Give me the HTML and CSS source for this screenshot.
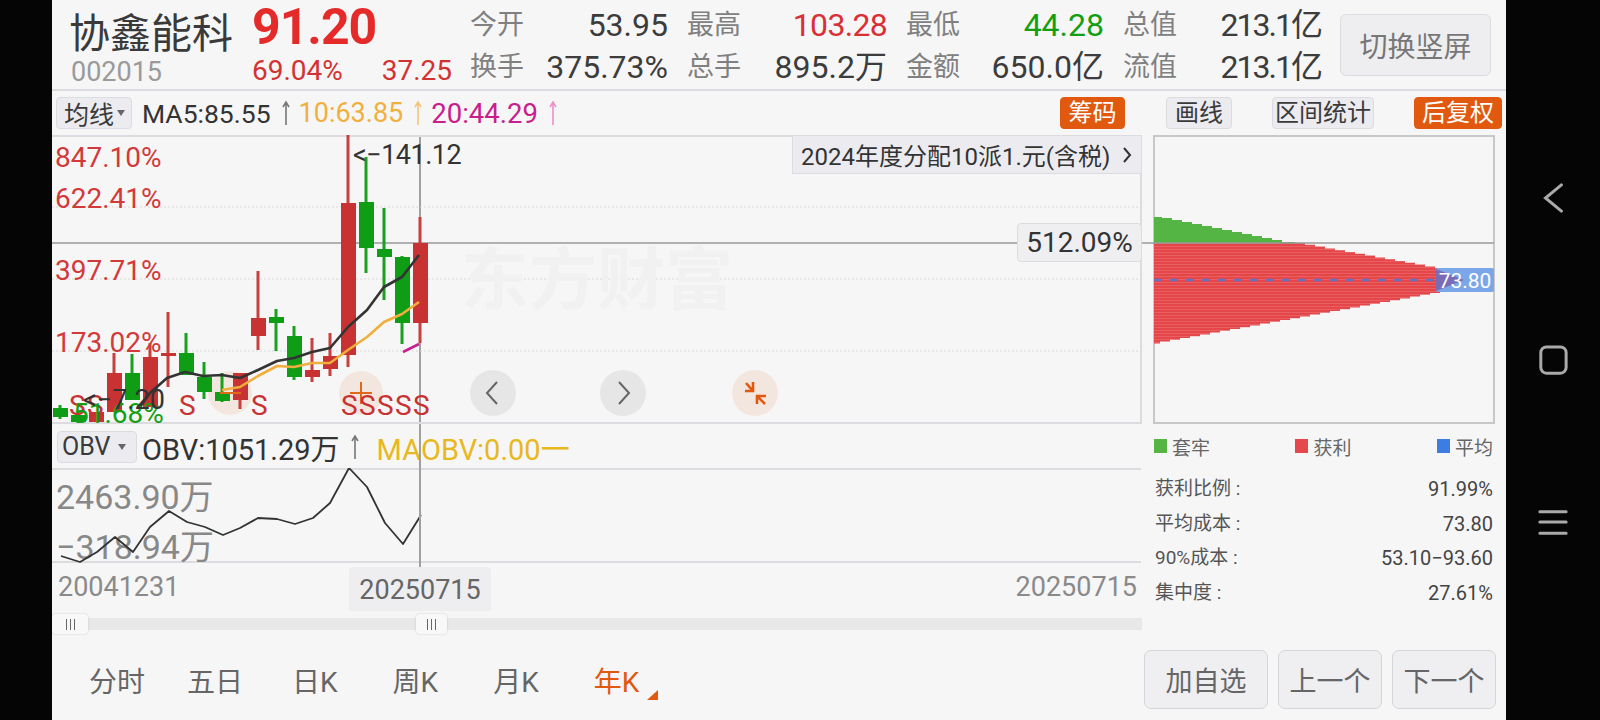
FILE: index.html
```html
<!DOCTYPE html>
<html lang="zh">
<head>
  <meta charset="UTF-8">
  <meta name="viewport" content="width=device-width, initial-scale=1.0">
  <title>协鑫能科 002015</title>
  <link rel="stylesheet" href="styles.css">
</head>
<body>
  <div class="app">
    <div class="edge"></div>

    <main class="main">
      <!-- 行情头部 -->
      <header class="quote">
        <div class="name-box">
          <div class="stock-name">协鑫能科</div>
          <div class="stock-code">002015</div>
        </div>
        <div class="price-box">
          <div class="price">91.20</div>
          <div class="change"><span>69.04%</span><span>37.25</span></div>
        </div>
        <div class="stats">
          <div class="stat"><span class="stat-label">今开</span><span>53.95</span></div>
          <div class="stat"><span class="stat-label">最高</span><span class="up tight-sm">103.28</span></div>
          <div class="stat"><span class="stat-label">最低</span><span class="down">44.28</span></div>
          <div class="stat"><span class="stat-label">总值</span><span class="tight">213.1亿</span></div>
          <div class="stat"><span class="stat-label">换手</span><span>375.73%</span></div>
          <div class="stat"><span class="stat-label">总手</span><span>895.2万</span></div>
          <div class="stat"><span class="stat-label">金额</span><span>650.0亿</span></div>
          <div class="stat"><span class="stat-label">流值</span><span class="tight">213.1亿</span></div>
        </div>
        <button class="rotate-btn">切换竖屏</button>
      </header>

      <div class="workspace">
        <section class="charts">
          <div class="crosshair"></div>

          <div class="indicator-row">
            <button class="select-btn">均线<i class="caret"></i></button>
            <span class="ma-item">MA5:85.55</span>
            <svg class="arrow arrow-gray" viewBox="0 0 10 26"><path d="M5 25V2M2 7L5 2L8 7"/></svg>
            <span class="ma-item ma-orange">10:63.85</span>
            <svg class="arrow arrow-orange" viewBox="0 0 10 26"><path d="M5 25V2M2 7L5 2L8 7"/></svg>
            <span class="ma-item ma-pink">20:44.29</span>
            <svg class="arrow arrow-pink" viewBox="0 0 10 26"><path d="M5 25V2M2 7L5 2L8 7"/></svg>
            <button class="chip chip-on chip-end">筹码</button>
          </div>

          <!-- K线图 -->
          <div class="kline">
            <svg class="kline-svg" viewBox="52 135 1090 290" width="1090" height="290">
              <path class="frame" d="M52 136H1141V423H52M1141 136V423"/>
              <path class="grid" d="M52 207H1141M52 279H1141M52 351H1141"/>
              <text class="watermark" x="461" y="304">东方财富</text>
              <path class="cross" d="M52 243H1141"/>

              <text class="axis-up" x="55" y="167">847.10%</text>
              <text class="axis-up" x="55" y="208">622.41%</text>
              <text class="axis-up" x="55" y="280">397.71%</text>
              <text class="axis-up" x="55" y="352">173.02%</text>

              <circle class="dot-peach" cx="230" cy="393" r="22"/>
              <circle class="dot-peach" cx="361" cy="393" r="22"/>

              <g class="candle-up">
                <path class="wick" d="M114 353V412M150 343V407M168 312V387M240 373V409M258 271V350M312 338V382M330 333V376M348 135V367M420 217V343"/>
                <rect x="89" y="412" width="15" height="10"/>
                <rect x="107" y="373" width="15" height="39"/>
                <rect x="143" y="357" width="15" height="50"/>
                <rect x="161" y="353" width="15" height="3"/>
                <rect x="233" y="373" width="15" height="27"/>
                <rect x="251" y="318" width="15" height="18"/>
                <rect x="305" y="370" width="15" height="7"/>
                <rect x="323" y="356" width="15" height="13"/>
                <rect x="341" y="203" width="15" height="152"/>
                <rect x="413" y="243" width="15" height="80"/>
              </g>
              <g class="candle-down">
                <path class="wick" d="M60 405V419M78 412V423M132 354V400M186 333V375M204 362V399M222 373V402M276 309V351M294 326V380M366 157V273M384 208V300M402 256V344"/>
                <rect x="53" y="408" width="15" height="9"/>
                <rect x="71" y="415" width="15" height="7"/>
                <rect x="125" y="373" width="15" height="27"/>
                <rect x="179" y="353" width="15" height="22"/>
                <rect x="197" y="377" width="15" height="15"/>
                <rect x="215" y="392" width="15" height="9"/>
                <rect x="269" y="317" width="15" height="6"/>
                <rect x="287" y="336" width="15" height="41"/>
                <rect x="359" y="202" width="15" height="46"/>
                <rect x="377" y="249" width="15" height="8"/>
                <rect x="395" y="257" width="15" height="66"/>
              </g>

              <polyline class="line-black" points="140,407 150,393 167,378 185,372 203,376 222,375 240,378 258,370 277,361 294,358 312,352 330,348 348,327 367,310 384,287 402,277 419,255"/>
              <polyline class="line-orange" points="222,390 240,387 258,376 277,366 294,367 312,363 330,363 348,350 367,337 384,322 402,314 419,302"/>
              <path class="line-pink" d="M403 352L419 344"/>

              <path class="mark-orange" d="M220 393H241M350 393H372M361 382V404"/>

              <text class="mark-s" x="69" y="415">S</text>
              <text class="mark-s" x="87" y="415">S</text>
              <text class="mark-s" x="179" y="415">S</text>
              <text class="mark-s" x="251" y="415">S</text>
              <text class="mark-s" x="341" y="415">S</text>
              <text class="mark-s" x="359" y="415">S</text>
              <text class="mark-s" x="377" y="415">S</text>
              <text class="mark-s" x="395" y="415">S</text>
              <text class="mark-s" x="413" y="415">S</text>

              <text class="axis-down" x="73" y="423">51.68%</text>
              <text class="note" x="83" y="409">&lt;−7.20</text>
              <text class="note note-tight" x="353" y="164">&lt;−141.12</text>

              <circle class="dot-gray" cx="493" cy="393" r="23"/>
              <path class="nav-chevron" d="M497 382L487 393L497 404"/>
              <circle class="dot-gray" cx="623" cy="393" r="23"/>
              <path class="nav-chevron" d="M619 382L629 393L619 404"/>
              <circle class="dot-peach" cx="755" cy="393" r="23"/>
              <path class="shrink-icon" d="M745 391H753V382M753 391L746 383M757 404V396H766M757 396L765 404"/>
            </svg>
            <div class="notice">2024年度分配10派1.元(含税)
              <svg class="notice-arrow" viewBox="0 0 10 18"><path d="M2 2L8 9L2 16"/></svg>
            </div>
            <div class="cross-tag">512.09%</div>
          </div>

          <div class="indicator-row obv-row">
            <button class="select-btn obv-btn">OBV<i class="caret"></i></button>
            <span class="obv-item">OBV:1051.29万</span>
            <svg class="arrow arrow-gray" viewBox="0 0 10 26"><path d="M5 25V2M2 7L5 2L8 7"/></svg>
            <span class="obv-item obv-amber">MAOBV:0.00一</span>
          </div>

          <!-- OBV副图 -->
          <svg class="obv-svg" viewBox="52 468 1090 96" width="1090" height="96">
            <path class="frame" d="M52 469H1141M52 562H1141"/>
            <text class="obv-axis" x="56" y="509">2463.90万</text>
            <text class="obv-axis" x="56" y="559">−318.94万</text>
            <polyline class="line-thin" points="61,556 80,562 97,552 115,537 133,552 150,527 169,511 187,522 205,527 223,535 240,528 258,518 277,519 295,524 313,518 330,503 349,468 367,487 385,523 403,544 421,515"/>
          </svg>

          <div class="dates">
            <span>20041231</span>
            <span class="date-current">20250715</span>
            <span>20250715</span>
          </div>

          <div class="slider">
            <div class="slider-handle handle-start"><i></i><i></i><i></i></div>
            <div class="slider-handle handle-end"><i></i><i></i><i></i></div>
          </div>

          <nav class="tabs">
            <span class="tab tab-fenshi">分时</span>
            <span class="tab tab-wuri">五日</span>
            <span class="tab tab-ri">日K</span>
            <span class="tab tab-zhou">周K</span>
            <span class="tab tab-yue">月K</span>
            <span class="tab tab-active">年K<i class="corner"></i></span>
          </nav>
        </section>

        <aside class="side">
          <div class="side-tools">
            <button class="chip chip-draw">画线</button>
            <button class="chip chip-range">区间统计</button>
            <button class="chip chip-on chip-adjust">后复权</button>
          </div>

          <!-- 筹码分布 -->
          <svg class="dist-svg" viewBox="1142 135 364 290" width="364" height="290">
            <defs>
              <pattern id="red-stripes" width="4" height="3" patternUnits="userSpaceOnUse">
                <rect width="4" height="3" fill="#e5464a"/>
                <rect width="4" height="1" fill="#e95f62"/>
              </pattern>
            </defs>
            <rect class="dist-frame" x="1154" y="136" width="340" height="287"/>
            <path class="dist-green" d="M1154 217H1162V218H1172V220H1182V222H1192V224H1202V226H1212V228H1222V230H1232V232H1242V234H1252V236H1262V238H1272V240H1282V242H1295V243H1154Z"/>
            <path fill="url(#red-stripes)" d="M1154 243H1295h10v1.8h10v1.8h10v1.8h10v1.8h10v1.8h10v1.8h10v1.8h10v1.8h10v1.8h10v1.8h10v1.8h10v1.8h10v1.8h10v1.8H1440V293h-10v1.8h-10v1.8h-10v1.8h-10v1.8h-10v1.8h-10v1.8h-10v1.8h-10v1.8h-10v1.8h-10v1.8h-10v1.8h-10v1.8h-10v1.8h-10v1.8h-10v1.8h-10v1.8h-10v1.8h-10v1.8h-10v1.8h-10v1.8h-10v1.8h-10v1.8h-10v1.8h-10v1.8h-10v1.8h-10v1.8h-10v1.8h-10v1.8H1154Z"/>
            <path class="cross" d="M1142 243H1494"/>
            <path class="dist-avg" d="M1154 280H1436"/>
            <rect class="price-tag" x="1436" y="268" width="58" height="24" rx="2"/>
            <path class="price-tag-mix" d="M1436 269L1464 280L1436 291Z"/>
            <text class="price-tag-text" x="1465" y="288">73.80</text>
          </svg>

          <div class="legend">
            <span class="legend-item"><i class="swatch swatch-green"></i>套牢</span>
            <span class="legend-item"><i class="swatch swatch-red"></i>获利</span>
            <span class="legend-item"><i class="swatch swatch-blue"></i>平均</span>
          </div>

          <div class="cost-list">
            <div class="cost-row"><span>获利比例 :</span><span>91.99%</span></div>
            <div class="cost-row"><span>平均成本 :</span><span>73.80</span></div>
            <div class="cost-row"><span>90%成本 :</span><span>53.10−93.60</span></div>
            <div class="cost-row"><span>集中度 :</span><span>27.61%</span></div>
          </div>

          <div class="actions">
            <button class="action-btn action-wide">加自选</button>
            <button class="action-btn">上一个</button>
            <button class="action-btn">下一个</button>
          </div>
        </aside>
      </div>
    </main>

    <!-- 手机导航条 -->
    <div class="phone-nav">
      <svg class="phone-icon" viewBox="0 0 32 32"><path d="M25 2L8 16L25 30"/></svg>
      <svg class="phone-icon" viewBox="0 0 32 32"><rect x="3" y="2" width="27" height="28" rx="6"/></svg>
      <svg class="phone-icon" viewBox="0 0 32 32"><path d="M2 5H30M2 16H30M2 28H30"/></svg>
    </div>
  </div>
</body>
</html>
```

FILE: styles.css
```css
* {
  box-sizing: border-box;
}

body {
  margin: 0;
  background-color: #000;
  font-family: Roboto, "Noto Sans CJK SC", sans-serif;
  color: #333;
}

button {
  font-family: inherit;
  padding: 0;
  cursor: pointer;
}

.app {
  display: flex;
  width: 1600px;
  height: 720px;
  overflow: hidden;
}

.edge {
  width: 52px;
  background-color: #050505;
}

.main {
  width: 1454px;
  background-color: #f6f6f6;
  display: flex;
  flex-direction: column;
}

/* 头部 */
.quote {
  display: flex;
  height: 91px;
  padding-left: 17px;
  border-bottom: 2px solid #dcdce0;
}

.name-box {
  width: 183px;
}

.stock-name {
  font-size: 41px;
  line-height: 48px;
  margin-top: 10px;
  color: #3a3a3a;
}

.stock-code {
  font-size: 27px;
  line-height: 30px;
  margin-top: -1px;
  color: #9a9a9a;
  margin-left: 2px;
}

.price-box {
  width: 218px;
}

.price {
  font-size: 50px;
  line-height: 54px;
  font-weight: 700;
  color: #e52a2a;
  letter-spacing: -1px;
}

.change {
  display: flex;
  justify-content: space-between;
  width: 200px;
  font-size: 28px;
  line-height: 30px;
  margin-top: 2px;
  color: #d23232;
}

.stats {
  display: grid;
  grid-template-columns: 198px 200px 198px 198px;
  grid-auto-rows: 42px;
  column-gap: 19px;
  padding-top: 4px;
  font-size: 32px;
  line-height: 42px;
  color: #3c3c3c;
}

.stat {
  display: flex;
  justify-content: space-between;
}

.stat-label {
  font-size: 27px;
  color: #808080;
}

.up {
  color: #d92f35;
}

.down {
  color: #12a012;
}

.tight {
  letter-spacing: -2px;
}

.tight-sm {
  letter-spacing: -0.7px;
}

.rotate-btn {
  width: 151px;
  height: 62px;
  margin: 14px 0 0 19px;
  font-size: 28px;
  color: #777;
  background-color: #eeeef0;
  border: 1px solid #dcdce0;
  border-radius: 6px;
}

.workspace {
  flex: 1;
  display: flex;
}

.charts {
  position: relative;
  width: 1090px;
}

/* 指标栏 */
.indicator-row {
  display: flex;
  align-items: center;
  height: 44px;
  padding-left: 4px;
}

.select-btn {
  width: 76px;
  height: 32px;
  display: flex;
  align-items: center;
  padding-left: 7px;
  font-size: 25px;
  color: #3a3a3a;
  background-color: #ececf0;
  border: 1px solid #dcdce0;
  border-radius: 4px;
}

.caret {
  width: 0;
  height: 0;
  margin-left: 3px;
  border-left: 4px solid transparent;
  border-right: 4px solid transparent;
  border-top: 6px solid #666;
}

.ma-item {
  font-size: 26.5px;
  color: #333;
  margin-left: 10px;
}

.ma-orange {
  font-size: 27px;
  color: #f0b040;
  margin-left: 8px;
}

.ma-pink {
  font-size: 27.5px;
  color: #c7208c;
  margin-left: 8px;
}

.arrow {
  width: 10px;
  height: 26px;
  margin-left: 10px;
  flex: none;
}

.arrow path {
  fill: none;
  stroke-width: 1.6;
}

.arrow-gray path {
  stroke: #777;
}

.arrow-orange path {
  stroke: #f4c47a;
}

.arrow-pink path {
  stroke: #ec90c8;
}

.chip {
  height: 32px;
  display: flex;
  align-items: center;
  justify-content: center;
  font-size: 24px;
  line-height: 1;
  color: #3a3a3a;
  background-color: #ececf0;
  border: 1px solid #dcdce0;
  border-radius: 4px;
}

.chip-on {
  color: #fff;
  background-color: #e0590f;
  border-color: #e0590f;
}

.chip-end {
  width: 65px;
  margin-left: auto;
  margin-right: 17px;
}

/* K线 */
.kline {
  position: relative;
  height: 291px;
}

.kline-svg,
.obv-svg,
.dist-svg {
  display: block;
}

.frame {
  fill: none;
  stroke: #dcdce0;
  stroke-width: 2;
}

.grid {
  fill: none;
  stroke: #d8d8d8;
  stroke-width: 1;
  stroke-dasharray: 2 2;
}

.cross {
  fill: none;
  stroke: #999;
  stroke-width: 1.6;
}

.watermark {
  font-size: 68px;
  font-weight: 700;
  fill: #f1f1f1;
}

.axis-up {
  font-size: 28px;
  fill: #d23a3a;
}

.axis-down {
  font-size: 28px;
  fill: #12a012;
}

.note {
  font-size: 27px;
  fill: #333;
}

.note-tight {
  letter-spacing: -0.5px;
}

.mark-s {
  font-size: 28px;
  fill: #c83232;
}

.candle-up rect {
  fill: #c83232;
}

.candle-down rect {
  fill: #0f9d16;
}

.wick {
  fill: none;
  stroke-width: 3;
}

.candle-up .wick {
  stroke: #c83f3f;
}

.candle-down .wick {
  stroke: #1a9f1f;
}

.line-black,
.line-orange,
.line-pink,
.line-thin {
  fill: none;
  stroke-linejoin: round;
}

.line-black {
  stroke: #333;
  stroke-width: 2.6;
}

.line-orange {
  stroke: #f0ae3c;
  stroke-width: 2.6;
}

.line-pink {
  stroke: #c71f8e;
  stroke-width: 2.6;
}

.line-thin {
  stroke: #333;
  stroke-width: 1.8;
}

.mark-orange {
  fill: none;
  stroke: #e0681a;
  stroke-width: 2;
}

.dot-peach {
  fill: #e8a078;
  fill-opacity: 0.18;
}

.dot-gray {
  fill: #e6e6e6;
}

.nav-chevron {
  fill: none;
  stroke: #666;
  stroke-width: 2;
}

.shrink-icon {
  fill: none;
  stroke: #e0590f;
  stroke-width: 2.6;
}

.notice {
  position: absolute;
  top: 0;
  right: 0;
  width: 350px;
  height: 39px;
  display: flex;
  align-items: center;
  padding-left: 8px;
  font-size: 24px;
  color: #333;
  white-space: nowrap;
  background-color: #ececf0;
  border: 1px solid #dcdce0;
}

.notice-arrow {
  width: 10px;
  height: 18px;
  margin-left: 12px;
  flex: none;
  fill: none;
  stroke: #333;
  stroke-width: 2;
}

.cross-tag {
  position: absolute;
  top: 88px;
  right: 0;
  width: 125px;
  height: 39px;
  display: flex;
  align-items: center;
  justify-content: center;
  font-size: 28px;
  color: #333;
  background-color: #efeff1;
  border: 1px solid #dcdce0;
  border-radius: 4px;
}

/* OBV */
.obv-row {
  height: 43px;
  margin-top: -1px;
  padding-left: 5px;
}

.obv-btn {
  width: 80px;
  padding-left: 4px;
  font-size: 25px;
}

.obv-btn .caret {
  margin-left: 8px;
}

.obv-item {
  font-size: 29px;
  color: #333;
  margin-left: 5px;
}

.obv-amber {
  color: #e8b820;
  margin-left: 17px;
}

.obv-axis {
  font-size: 34px;
  fill: #888;
}

.dates {
  position: relative;
  display: flex;
  justify-content: space-between;
  align-items: flex-start;
  height: 50px;
  padding: 7px 5px 0 6px;
  font-size: 27px;
  line-height: 32px;
  color: #8a8a8a;
}

.date-current {
  position: absolute;
  left: 297px;
  top: 3px;
  width: 142px;
  height: 44px;
  text-align: center;
  line-height: 46px;
  color: #666;
  background-color: #eeeef0;
  border-radius: 4px;
}

.slider {
  position: relative;
  height: 20px;
  display: flex;
  align-items: center;
}

.slider::before {
  content: "";
  width: 100%;
  height: 12px;
  background-color: #e8e8e8;
}

.slider-handle {
  position: absolute;
  top: 0;
  height: 20px;
  display: flex;
  align-items: center;
  justify-content: center;
  gap: 3px;
  background-color: #f8f8f8;
  border-radius: 4px;
  box-shadow: 0 0 2px rgba(0, 0, 0, 0.2);
}

.slider-handle i {
  width: 1px;
  height: 11px;
  background-color: #666;
}

.handle-start {
  left: 0;
  width: 36px;
}

.handle-end {
  left: 364px;
  width: 31px;
}

.tabs {
  display: flex;
  align-items: center;
  height: 86px;
  padding-top: 6px;
  font-size: 28px;
  color: #666;
}

.tab-fenshi {
  margin-left: 37px;
}

.tab-wuri {
  margin-left: 42px;
}

.tab-ri {
  margin-left: 49px;
}

.tab-zhou {
  margin-left: 55px;
}

.tab-yue {
  margin-left: 55px;
}

.tab-active {
  position: relative;
  margin-left: 55px;
  color: #e0590f;
}

.corner {
  position: absolute;
  left: 53px;
  bottom: 0;
  width: 0;
  height: 0;
  border-left: 11px solid transparent;
  border-bottom: 10px solid #e0590f;
}

.crosshair {
  position: absolute;
  left: 367px;
  top: 45px;
  width: 2px;
  height: 431px;
  background-color: #a0a0a0;
}

/* 右栏 */
.side {
  width: 364px;
  display: flex;
  flex-direction: column;
}

.side-tools {
  display: flex;
  height: 44px;
  padding-top: 6px;
}

.chip-draw {
  width: 66px;
  margin-left: 24px;
}

.chip-range {
  width: 102px;
  margin-left: 40px;
}

.chip-adjust {
  width: 88px;
  margin-left: 40px;
}

.dist-frame {
  fill: none;
  stroke: #c8c8c8;
  stroke-width: 2;
}

.dist-green {
  fill: #55b544;
}

.dist-avg {
  fill: none;
  stroke: #6a6fc0;
  stroke-width: 2.5;
  stroke-dasharray: 8 8;
}

.price-tag {
  fill: #7ba7e8;
}

.price-tag-mix {
  fill: #7a6cb4;
}

.price-tag-text {
  font-size: 21px;
  fill: #fff;
  text-anchor: middle;
}

.legend {
  display: flex;
  justify-content: space-between;
  height: 42px;
  align-items: center;
  padding: 0 13px 0 12px;
  font-size: 19px;
  color: #666;
}

.legend-item {
  display: flex;
  align-items: center;
  gap: 5px;
}

.swatch {
  width: 13px;
  height: 14px;
}

.swatch-green {
  background-color: #55b544;
}

.swatch-red {
  background-color: #e5484c;
}

.swatch-blue {
  background-color: #3b7de0;
}

.cost-list {
  margin-top: 5px;
  padding: 0 13px;
  font-size: 19px;
  color: #555;
}

.cost-row {
  display: flex;
  justify-content: space-between;
  height: 34.5px;
  line-height: 34.5px;
}

.cost-row span:last-child {
  font-size: 20px;
  color: #444;
}

.actions {
  display: flex;
  gap: 10px;
  margin-top: auto;
  margin-bottom: 11px;
  padding-left: 2px;
}

.action-btn {
  width: 104px;
  height: 59px;
  font-size: 27px;
  color: #666;
  background-color: #efeff2;
  border: 1px solid #d5d5da;
  border-radius: 7px;
}

.action-wide {
  width: 124px;
}

/* 导航条 */
.phone-nav {
  width: 94px;
  background-color: #050505;
  position: relative;
  display: flex;
  flex-direction: column;
  align-items: center;
  gap: 132px;
  padding: 183px 0 0 0;
}

.phone-icon {
  width: 30px;
  height: 30px;
  flex: none;
  fill: none;
  stroke: #aaa;
  stroke-width: 3.2;
  stroke-linecap: round;
}
```
